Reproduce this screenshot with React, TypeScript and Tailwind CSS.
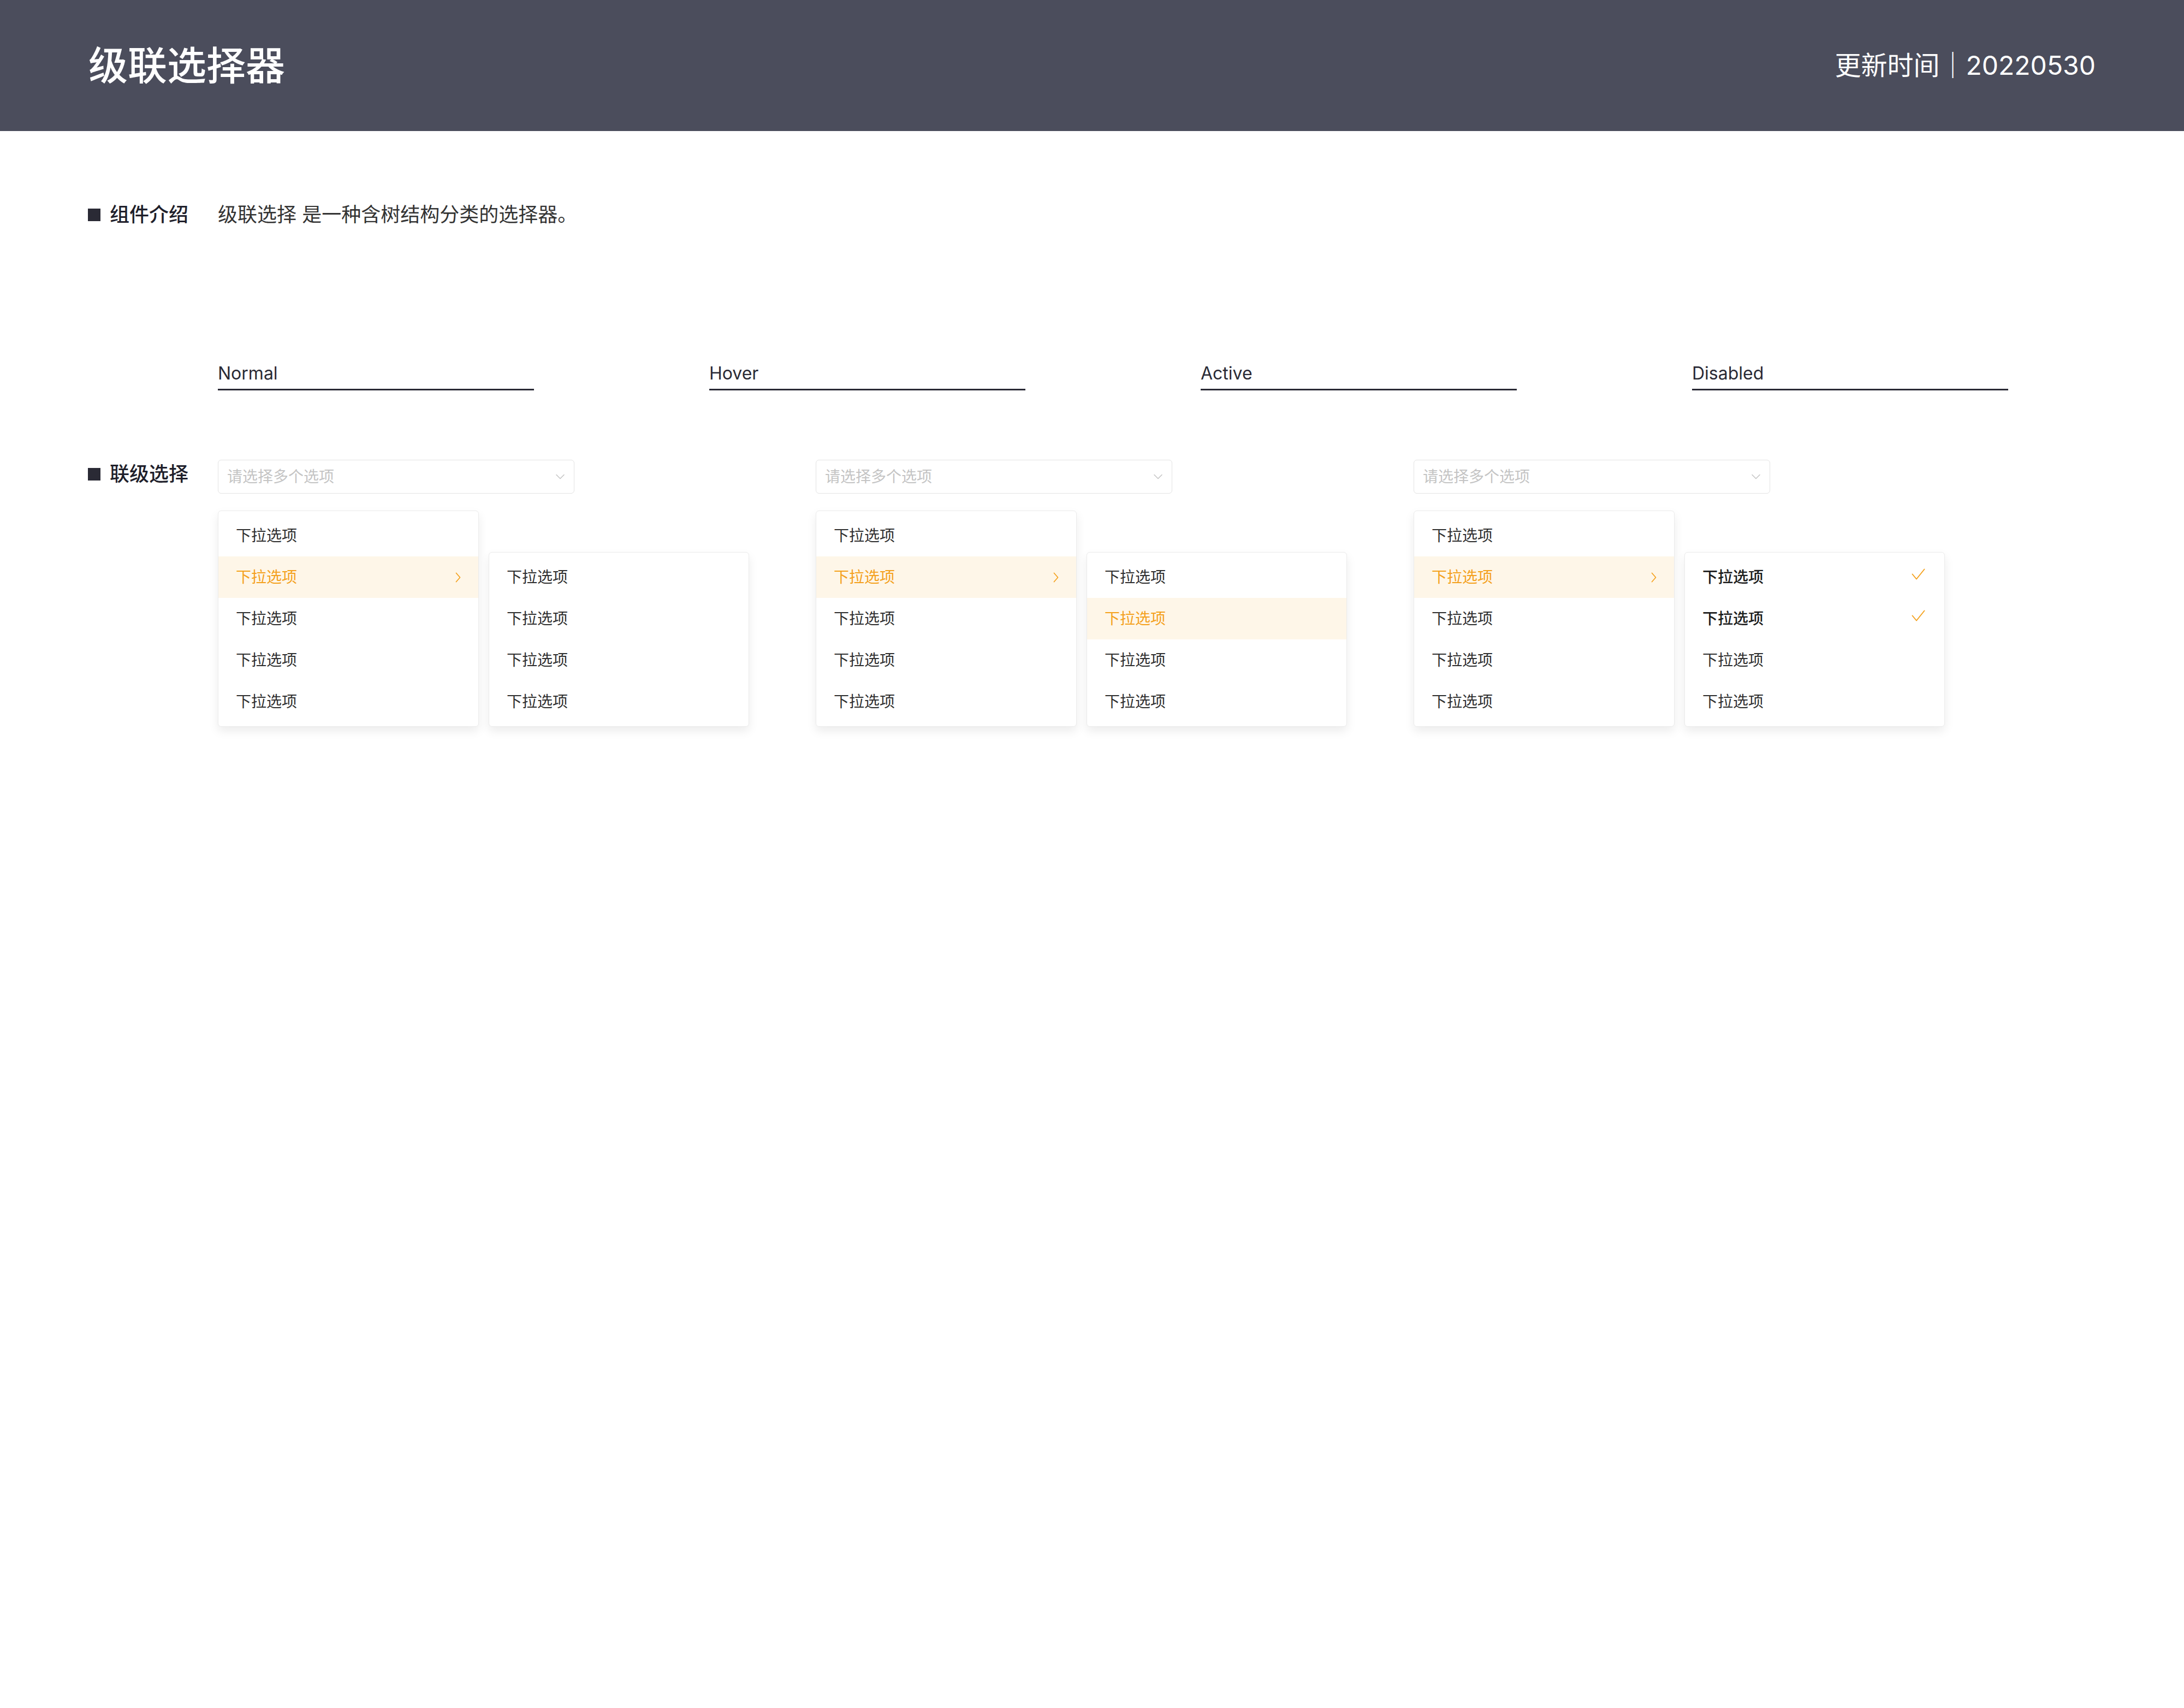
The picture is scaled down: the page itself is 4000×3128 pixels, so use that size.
import React from "react";

type Variant = "normal" | "hover" | "checked";

const labels = ["Normal", "Hover", "Active", "Disabled"];
const groups: Variant[] = ["normal", "hover", "checked"];

function ChevronDown() {
  return (
    <svg width="16" height="10" viewBox="0 0 16 10" fill="none">
      <path d="M1 1.5L8 8.5L15 1.5" stroke="#c6c6c6" strokeWidth="1.6" strokeLinecap="round" strokeLinejoin="round" />
    </svg>
  );
}

function ChevronRight() {
  return (
    <svg width="10" height="19" viewBox="0 0 10 19" fill="none">
      <path d="M1.5 1.5L8.5 9.5L1.5 17.5" stroke="#f4a11d" strokeWidth="1.7" strokeLinecap="round" strokeLinejoin="round" />
    </svg>
  );
}

function Check() {
  return (
    <svg width="25" height="21" viewBox="0 0 25 21" fill="none" className="mb-3">
      <path d="M1.5 10.5L9 19.5L23.5 1.5" stroke="#f4a11d" strokeWidth="1.9" strokeLinecap="round" strokeLinejoin="round" />
    </svg>
  );
}

function SectionTitle({ text }: { text: string }) {
  return (
    <div className="flex h-[54px] w-[238px] shrink-0 items-center gap-[17px]">
      <span className="h-[23px] w-[23px] bg-[#2a2a35]" />
      <span className="text-[36px] font-medium text-[#1f1f2b]">{text}</span>
    </div>
  );
}

function Cascader({ variant }: { variant: Variant }) {
  const sub = [0, 1, 2, 3];

  return (
    <div className="flex w-[973px] flex-col">
      {/* 输入框 */}
      <div className="flex h-[62px] w-[653px] items-center justify-between rounded-[6px] border border-[#e3e3e3] pr-[17px] pl-[16px]">
        <span className="text-[28px] text-[#c4c4c4]">请选择多个选项</span>
        <ChevronDown />
      </div>

      <div className="mt-[31px] flex items-start gap-[18px]">
        {/* 一级 */}
        <div className="w-[478px] rounded-[6px] border border-[#ebebeb] bg-white py-[7px] shadow-[0_8px_18px_rgba(0,0,0,0.08)]">
          {[0, 1, 2, 3, 4].map((i) =>
            i === 1 ? (
              <div key={i} className="flex h-[76px] items-center justify-between bg-[#fef6e8] pr-[32px] pl-[32px]">
                <span className="text-[28px] text-[#f4a11d]">下拉选项</span>
                <ChevronRight />
              </div>
            ) : (
              <div key={i} className="flex h-[76px] items-center pl-[32px]">
                <span className="text-[28px] text-[#2f2f2f]">下拉选项</span>
              </div>
            ),
          )}
        </div>

        {/* 二级 */}
        <div className="mt-[76px] w-[477px] rounded-[6px] border border-[#ebebeb] bg-white py-[7px] shadow-[0_8px_18px_rgba(0,0,0,0.08)]">
          {sub.map((i) => {
            if (variant === "hover" && i === 1) {
              return (
                <div key={i} className="flex h-[76px] items-center bg-[#fef6e8] pl-[32px]">
                  <span className="text-[28px] text-[#f4a11d]">下拉选项</span>
                </div>
              );
            }
            if (variant === "checked" && i < 2) {
              return (
                <div key={i} className="flex h-[76px] items-center justify-between pr-[35px] pl-[32px]">
                  <span className="text-[28px] font-medium text-[#1c1c1c]">下拉选项</span>
                  <Check />
                </div>
              );
            }
            return (
              <div key={i} className="flex h-[76px] items-center pl-[32px]">
                <span className="text-[28px] text-[#2f2f2f]">下拉选项</span>
              </div>
            );
          })}
        </div>
      </div>
    </div>
  );
}

export default function App() {
  return (
    <div className="min-h-screen w-full bg-white [font-family:Inter,'Noto_Sans_CJK_SC',sans-serif]">
      <header className="flex h-[240px] items-center justify-between bg-[#4b4d5c] px-[162px] text-white">
        <h1 className="text-[72px] leading-none font-medium">级联选择器</h1>
        <p className="text-[48px] leading-none">更新时间｜20220530</p>
      </header>

      <main className="flex flex-col pl-[161px]">
        {/* 组件介绍 */}
        <section className="mt-[126px] flex items-center">
          <SectionTitle text="组件介绍" />
          <p className="text-[36px] text-[#333333]">级联选择 是一种含树结构分类的选择器。</p>
        </section>

        {/* 状态 */}
        <div className="mt-[244px] ml-[238px] flex gap-[321px]">
          {labels.map((l) => (
            <div key={l} className="w-[579px] border-b-[3px] border-[#2a2a35] pb-2 text-[32px] leading-[40px] text-[#2a2a35]">
              {l}
            </div>
          ))}
        </div>

        {/* 联级选择 */}
        <section className="mt-[126px] flex items-start">
          <SectionTitle text="联级选择" />
          <div className="flex gap-[122px] pt-px">
            {groups.map((g) => (
              <Cascader key={g} variant={g} />
            ))}
          </div>
        </section>
      </main>
    </div>
  );
}
